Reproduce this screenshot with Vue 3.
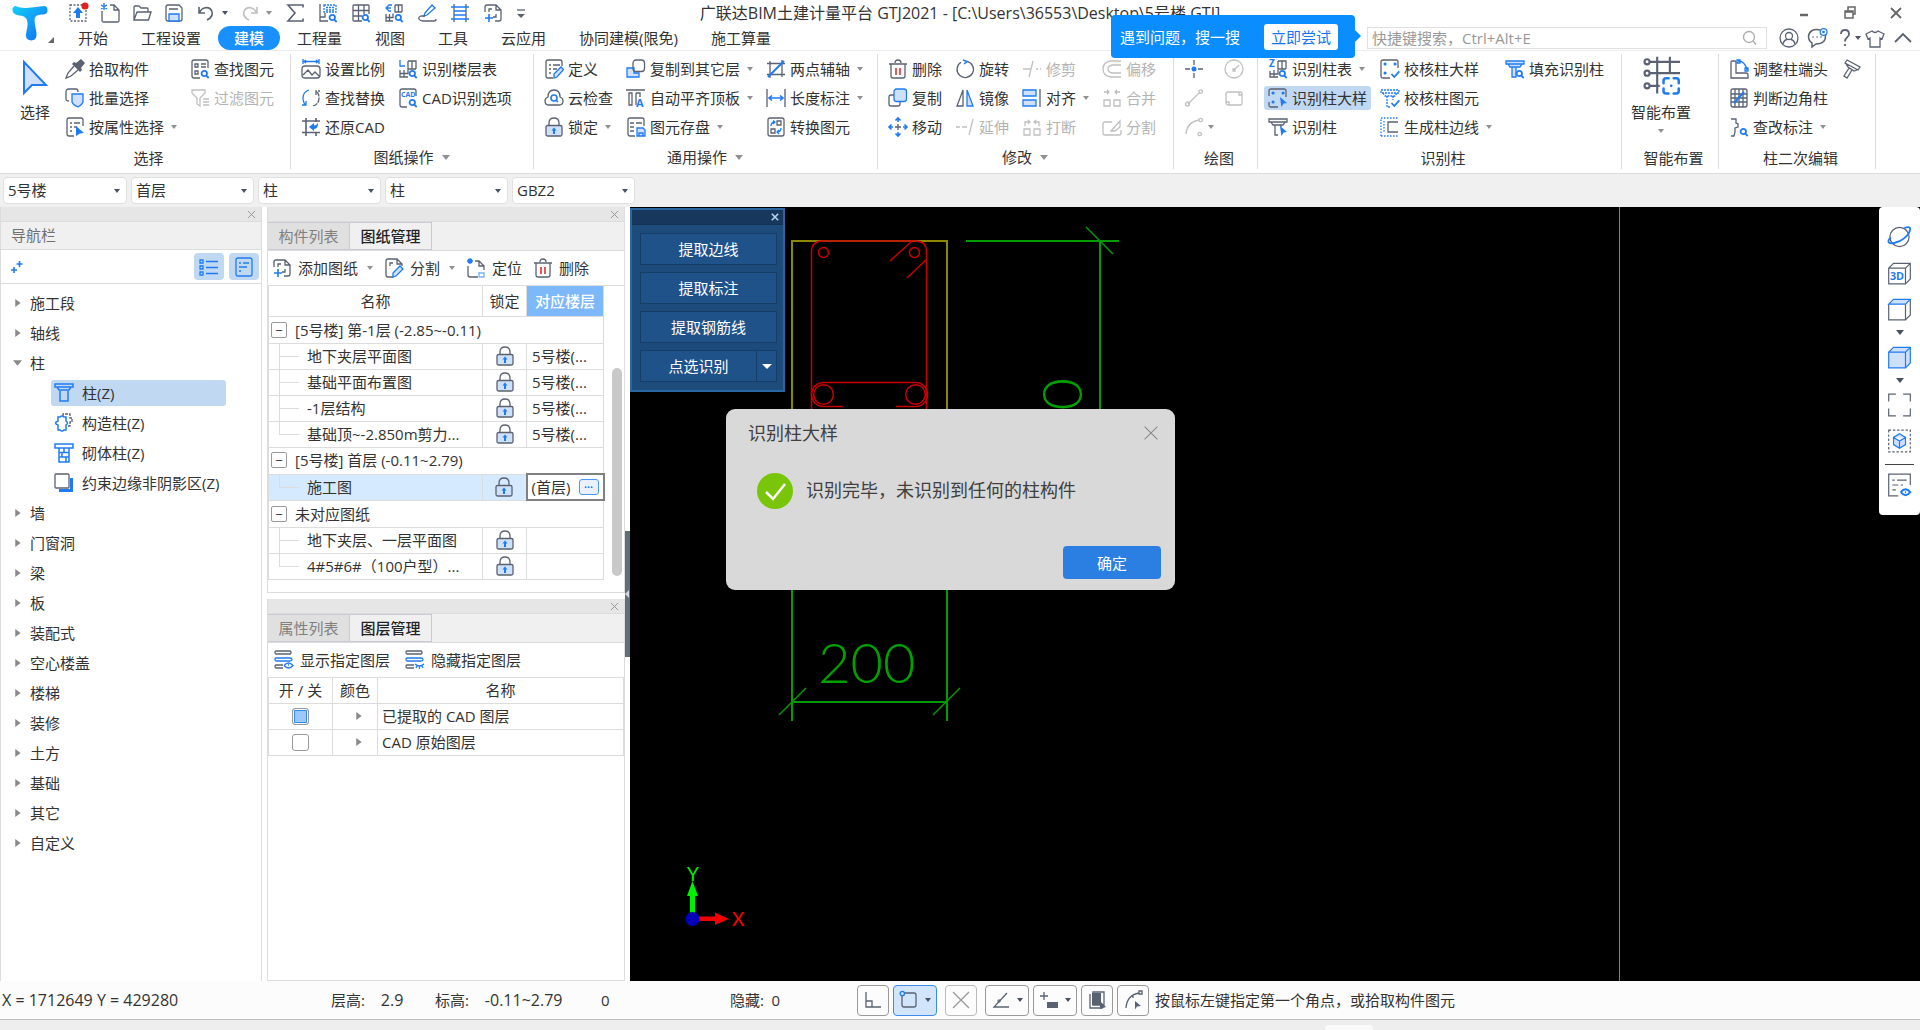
<script setup>
import { h, ref } from 'vue'

/* icon drawing helpers: dark stroke, accent stroke, accent fill, soft filled shape, dark fill */
const d = (path, extra = '') => `<path d="${path}" ${extra}/>`
const a = (path, extra = '') => `<path d="${path}" stroke="var(--acc)" ${extra}/>`
const f = (path) => `<path d="${path}" fill="var(--acc)" stroke="none"/>`
const l = (path) => `<path d="${path}" fill="var(--soft)" stroke="var(--acc)"/>`
const k = (path) => `<path d="${path}" fill="currentColor" stroke="none"/>`
const glass = a('M17 14.5a2.7 2.7 0 1 1-5.4 0a2.7 2.7 0 0 1 5.4 0M16.3 16.6l2.4 2.4', 'stroke-width="1.8"')
const cursor = f('M12 9l7 6-3.4.5L13.4 19z')
const check = a('M11.5 15l2.8 3 5-5.6', 'stroke-width="1.8"')
const pin = a('M5 5h.1M15 5h.1M5 14h.1', 'stroke-width="3" stroke-linecap="round"')

const icons = {
  upload: d('M2 2h16v16H2z', 'stroke-dasharray="2 1.5"') + f('M10 4l5 6h-3v5H8v-5H5z') + '<circle cx="17" cy="3" r="3.6" fill="#e02020" stroke="none"/>',
  create: d('M10 2h4l5 5v10.500a1.500 1.500 0 0 1-1.500 1.500H3.500A1.500 1.500 0 0 1 2 17.500V8M14 2v5h5') + a('M4 0v7M1 2l6 4M7 2L1 6'),
  open: d('M2 17V4q0-1 1-1h4l2 2h6q1 0 1 1v3M2 17l3-8h14l-2.500 8z'),
  save: d('M2 4q0-2 2-2h11l3 3v11q0 2-2 2H4q-2 0-2-2zM5 6h9') + l('M5 18v-7h10v7z'),
  undo: d('M3 4v6h6M3.500 9.500C6 4 13 3 15.500 7.500c2 4-.5 7.500-4.500 9.500', 'stroke-width="1.600"'),
  redo: d('M17 4v6h-6M16.500 9.500C14 4 7 3 4.500 7.500c-2 4 .5 7.500 4.500 9.500', 'stroke-width="1.600"'),
  sum: d('M18 4.500V2H3l7 8-7 8h15v-2.500', 'stroke-width="1.600"'),
  floorFind: d('M2 1v17h8M2 14h5V10') + a('M6 2h12v7H6zM8 4.500h8M8 7h8', 'stroke-dasharray="2 1"') + glass,
  gridFind: d('M2 3q0-1 1-1h14q1 0 1 1v8M2 3v14q0 1 1 1h8M2 7.500h16M2 13h9M7.500 2v16M13 2v9') + glass,
  swapFind: d('M11 2h7v7M11 2v7h7M14.500 2v7M2 11v7h7M2 14.500h7v-4M5.500 11v7') + a('M8 2H5L2 5l3 3h2M2 5h5') + glass,
  pencil: a('M8 10l7-8 3 3-8 7-3 1z') + d('M8 13H4q-3 1-2 3 1 2 4 2h11q2 0 2-2'),
  ladder: d('M4 1v18M16 1v18') + a('M1 4h18M1 16h18M4 8h12M4 12h12'),
  sheetAdd: d('M2 9V4q0-2 2-2h9l5 5v9q0 2-2 2h-4M6 9V6h3M13 11v3h-3M13 2v5h5') + a('M6 11v8M2 15h8', 'stroke-width="1.600"'),
  more: d('M6 7h8') + k('M6 11h8l-4 4z'),
  dropper: k('M11 4l5-4 4 4-4 5 1 2-2 2-8-8 2-2z') + d('M9 7l-6 7-2 5 5-2 7-6'),
  batch: d('M4 13q-3 0-3-2V4q0-3 3-3h7q2 0 2 3') + l('M7 6h11v8q-1 3-5 5-5-2-6-5z'),
  props: d('M9 19H4q-2 0-2-2V3q0-2 2-2h12q2 0 2 2v6M5 6h2M9 6h6M5 10h2M9 10h3M5 14h2') + f('M11 9l8 7-4 .5L11 19z'),
  findEl: d('M10 19H4q-2 0-2-2V3q0-2 2-2h12q2 0 2 2v6M5 5h3v3H5zM5 12h3v3H5zM11 5h5M11 8h5') + glass,
  filter: d('M2 2h13v3l-5 5v8l-3-2v-6L2 5zM13 11h6M13 14h6M13 17h6'),
  scale: a('M2 0v5M18 0v5M2 2.500h16M5 1L3 2.500 5 4M15 1l2 1.500L15 4') + d('M1 10q0-3 3-3h12q3 0 3 3v6q0 3-3 3H4q-3 0-3-3zM2 16l5-5 4 5 3-3 4 4'),
  replace: a('M8 2q-6 2-6 8 0 5 3 7M5 13v4H1') + d('M12 18q6-2 6-8 0-5-3-7M15 7V3h4M12 2h.1M8 18h.1', 'stroke-dasharray="5 1"'),
  restore: d('M5 1v18M15 1v4M15 15v4M1 4h18M1 15.500h18', 'stroke-width="1.600"') + f('M8 10l5-4v2.500q3 0 4-3 .5 6-4 6.500v2z'),
  floorTable: d('M10 2h8v8M10 2v8h8M14 2v8M2 11v7h8M2 14.500h8v-4M6 11v7') + a('M2 1v6h5') + glass,
  cadOpt: d('M9 19H4q-2 0-2-2V3q0-2 2-2h12q2 0 2 2v5') + '<text x="3" y="9" font-size="7" font-weight="700" fill="var(--acc)" stroke="none">CAD</text>' + glass,
  define: d('M9 19H4q-2 0-2-2V3q0-2 2-2h12q2 0 2 2v4M5 6h2M9 6h7M5 10h2M9 10h4M5 14h2') + l('M10 15l7-7 2.500 2.500L13 18l-3 1z'),
  cloud: d('M5 17q-4 0-4-4 0-3 3-4Q4 2 10 2t6 7q3 1 3 4 0 4-4 4z') + a('M13 10a3 3 0 1 1-6 0a3 3 0 0 1 6 0M12 12l2 2', 'stroke-width="1.600"'),
  lock: d('M5 9V6q0-5 5-5t5 5v3') + '<rect x="2" y="8.500" width="16" height="10.500" rx="1.500" fill="var(--soft)"/>' + f('M10 10.500l2.500 3H11v3.500H9v-3.500H7.500z'),
  copyLayer: l('M1 9h7v5h5v4H1z') + '<rect x="7" y="1" width="11.500" height="11.500" rx="3"/>',
  autoTop: d('M0 2h19M3 5h3v12H3zM10 5h4v4M10 5v12') + '<text x="10" y="19" font-size="11" font-weight="700" fill="var(--acc)" stroke="none">A</text>',
  saveEl: d('M9 19H4q-2 0-2-2V3q0-2 2-2h12q2 0 2 2v6M4 6h4M10 6h6M4 10h4M4 14h4') + l('M11 11h6l2 2v6h-8zM13 19v-3h4v3'),
  axisTwo: d('M4 2v17M16 1v17M1 4.500h18M1 15.500h18') + a('M2 18L18 2', 'stroke-width="2"'),
  length: d('M1 1v18M19 1v18') + a('M3 10h14M6 7.500L3 10l3 2.500M14 7.500l3 2.500-3 2.500', 'stroke-width="1.600"'),
  convert: d('M2 3q0-2 2-2h12q2 0 2 2v14q0 2-2 2H4q-2 0-2-2zM11 4h4v4h-4zM5 12h4v4H5z') + a('M5 9q0-4 4-4M7 3.500L9 5 7 7M15 11q0 4-4 4M13 13l-2 2 2 2'),
  trash: d('M1 5h18M7 4q0-3 3-3t3 3M3 5v12q0 2 2 2h10q2 0 2-2V5') + '<path d="M8 9v7M12 9v7" stroke="#e03030" stroke-width="1.600"/>',
  rotate: d('M12 2.300a8.200 8.200 0 1 1-6 1') + a('M8 1l4 1.500L9 5', 'stroke-width="1.600"'),
  trim: d('M1 10h8M14 10h2M18 10h1M11 2L7 18'),
  copy: d('M6 7H3q-2 0-2 2v7q0 2 2 2h7q2 0 2-2v-2') + '<rect x="6" y="1" width="12.500" height="12.500" rx="2.500" fill="var(--soft)" stroke="var(--acc)"/>',
  mirror: d('M8 2v16H2z') + l('M12 2v16h6z'),
  align: l('M1 2h13v6H1zM1 12h13v6H1z') + d('M18 1v18'),
  move: a('M10 1v4M10 19v-4M1 10h4M19 10h-4M7.500 3.500L10 1l2.500 2.500M7.500 16.500L10 19l2.500-2.500M3.500 7.500L1 10l2.500 2.500M16.500 7.500L19 10l-2.500 2.500', 'stroke-width="1.600"') + d('M10 7v6M7 10h6'),
  extend: d('M1 10h4M7 10h5M18 2l-4 16'),
  split2: d('M2 12h6v6H2zM12 12h6v6h-6zM3 9V5h5M6 3l2 2-2 2M17 9V5h-5M14 3l-2 2 2 2'),
  offset: d('M19 2H9q-8 1-8 8t8 8h10M19 6h-9q-4 1-4 4t4 4h9'),
  merge: d('M2 12h6v6H2zM12 12h6v6h-6zM2 4h5M5 2l2 2-2 2M18 4h-5M15 2l-2 2 2 2'),
  divide: d('M10 5H3q-2 0-2 2v9q0 2 2 2h14q2 0 2-2v-3M9 14l9-10v6l-5 4z'),
  point: d('M10 1v5M10 14v5M1 10h5M14 10h5') + '<circle cx="10" cy="10" r="2.500" fill="var(--acc)" stroke="none"/>',
  circle: '<circle cx="10" cy="10" r="9"/>' + d('M10 11l5-5M9 10h2v2H9z'),
  line: d('M4 16L16 4M1.500 16a2 2 0 1 0 4 0a2 2 0 1 0-4 0M15 3.500a1.700 1.700 0 1 0 3.400 0a1.700 1.700 0 1 0-3.400 0'),
  rect: '<rect x="2" y="4" width="16" height="13" rx="2"/>' + d('M15 4v3h3M2 14h3v3'),
  arc: d('M2 17Q3 5 15 3M15 3a1.700 1.700 0 1 0 3.400 0a1.700 1.700 0 1 0-3.400 0M14 17a1.700 1.700 0 1 0 3.400 0a1.700 1.700 0 1 0-3.400 0'),
  colTable: d('M10 2h8v8M10 2v8h8M14 2v8M2 12v6h8M2 15h8v-4M6 11v7') + '<text x="1" y="8" font-size="10" font-weight="700" fill="var(--acc)" stroke="none">Z</text>' + glass,
  colDetail: d('M10 19H3q-2 0-2-2v-3M1 8V3q0-2 2-2h13q2 0 2 2v6') + pin + cursor,
  col: d('M1 2h18v3H1zM3 5l2 3h10l2-3M7 8v10h3M13 8v2') + cursor,
  chkDetail: d('M10 19H3q-2 0-2-2V3q0-2 2-2h13q2 0 2 2v6') + pin + check,
  chkCol: a('M1 2h18v3H1zM3 5l2 3h10l2-3M7 8v11h3M13 8v4', 'stroke-dasharray="2 1"') + check,
  genEdge: a('M1 19V1h18M1 19h18M4 4v12', 'stroke-dasharray="1.500 1.500"') + d('M18 5H8v10h10'),
  fillCol: l('M1 2h18v3H1zM3 5l2 3h10l2-3M7 8v10h4V8z') + glass,
  adjust: d('M2 3q0-1 1-1h3q1 0 1 1v11h10q2 0 2 2v3H2z') + a('M9 2q7 0 9 9M8 1h3v3H8zM16 9h3v3h-3z'),
  judge: d('M2 3q0-2 2-2h12q2 0 2 2v14q0 2-2 2H4q-2 0-2-2zM6 1v18M10 1v18M14 1v18M2 6h16M2 10h16M2 14h16') + a('M5 15L15 4', 'stroke-width="2"'),
  editMark: d('M2 2h5v4L9 7v3L6 11v4l-1 4H2') + glass,
  hammer: d('M6 1l13 7-2 3L4 4zM5 5l2 3 6 4 3-1M8 9l-5 8 3 2 5-8'),
  toList: a('M1 3h3v3H1zM1 9h3v3H1zM1 15h3v3H1zM7 4.500h12M7 10.500h12M7 16.500h12'),
  toCard: a('M2 3q0-2 2-2h12q2 0 2 2v14q0 2-2 2H4q-2 0-2-2zM5 6h2M9 6h6M5 10h8M5 14h2'),
  colZ: a('M1 1h18v3H1zM3 4l2 3h10l2-3M6 8v10h8V8', 'stroke-width="1.500"'),
  colG: d('M9 3V1h7v4h2v4h-2v4h-2', 'stroke-dasharray="3 1"') + a('M4 4h2q2-2 4 0h2v4q3 2 0 4v5h-2q-2 2-4 0H4v-5q-5-2 0-4z', 'stroke-width="1.500"'),
  colQ: a('M1 1h18v4H1zM5 5v14h10V5M5 9.500h10M5 14h10M10 5v4.500M8 9.500V14M12 14v5', 'stroke-width="1.500"'),
  colY: k('M5 17h12V6h2v13H5z') + f('M5 16h11V5h3v14H5z') + '<rect x="1" y="1" width="14" height="14" rx="1" fill="#fff"/>',
  sheetSplit: d('M9 19H4q-2 0-2-2V3q0-2 2-2h9l5 5v2M13 1v5h5M6 8V5h3') + l('M9 15l7-7 3 3-7 7-3 1z'),
  locate: d('M2 8v9q0 2 2 2h8M9 3h4l5 5v4M13 3v5h5') + a('M4 0v6M1 3h6M2 1l4 4M6 1L2 5') + a('M13 19v-5M13 15h5v4h-5', 'opacity="0.600"'),
  layersOn: d('M2 1h14q1 0 1 1.500T16 4H2Q1 4 1 2.500T2 1M9 18H2q-1 0-1-1.500T2 15h7') + a('M2 8h14q2 0 2 1.500T16 11H2Q1 11 1 9.500T2 8M10 15.500q4.500-5 9 0-4.500 5-9 0M14 15h1'),
  layersOff: d('M2 1h14q1 0 1 1.500T16 4H2Q1 4 1 2.500T2 1M9 18H2q-1 0-1-1.500T2 15h7') + a('M2 8h14q2 0 2 1.500T16 11H2Q1 11 1 9.500T2 8M10 14q4.500 4 9 0M12 16l-1 2M14.500 16v3M17 16l1 2'),
  orbit: '<circle cx="10" cy="10" r="8"/>' + a('M14 2.500q5-2 5 1-1 6-9 10-7 3-9 1-1-2 2-4', 'stroke-width="1.500"'),
  cube3d: d('M1 6h14v13H1zM1 6l4-4h14v13l-4 4M15 6l4-4') + '<text x="2" y="16" font-size="9" font-weight="700" fill="var(--acc)" stroke="none">3D</text>',
  cubeTop: d('M1 6v13h14V6M19 2v13l-4 4') + l('M1 6l4-4h14l-4 4z'),
  cubeFull: l('M1 6h14v13H1zM1 6l4-4h14v13l-4 4M15 6l4-4'),
  frame: d('M1 7V1h6M13 1h6v6M19 13v6h-6M7 19H1v-6'),
  cubeBox: d('M1 1h18v18H1z', 'stroke-dasharray="2 1.500"') + l('M10 4l5 3v6l-5 3-5-3V7zM5 7l5 3 5-3M10 10v6'),
  eyeList: d('M9 19H1V1h18v9M4 6h2M8 6h8M4 10h5M11 10h2M4 14h3') + a('M11 16q4-5 8 0-4 5-8 0M14.500 16h1', 'stroke-width="1.600"'),
  smart: d('M6 3h24M6 12h24M6 22h8M12 -1v29M22 -1v13M2 3a2 2 0 1 0 4 0a2 2 0 1 0-4 0M2 12a2 2 0 1 0 4 0a2 2 0 1 0-4 0M2 22a2 2 0 1 0 4 0a2 2 0 1 0-4 0', 'stroke-width="1.700"') + a('M21 16h-2q-2 0-2 2v2M25 16h2q2 0 2 2v2M17 24v2q0 2 2 2h2M29 24v2q0 2-2 2h-2M23 22h.1', 'stroke-width="2" stroke-linecap="round"'),
  user: '<circle cx="10" cy="10" r="9"/><circle cx="10" cy="8" r="3.500"/>' + d('M4 16q1-4 4-4.500M16 16q-1-4-4-4.500'),
  chat: d('M13 2Q3 0 1.500 8q0 5 3.500 7v4l4-3q10 0 9.500-9M6 9h.1M10 9h.1M14 9h.1', 'stroke-width="1.500" stroke-linecap="round"') + a('M20 4a3.400 3.400 0 1 1-6.800 0a3.400 3.400 0 0 1 6.800 0M15.500 3l2 2M17.500 3l-2 2'),
  help: d('M6 6q0-4 4-4t4 4q0 2-2 3.500t-2 4M10 16v2', 'stroke-width="1.800"'),
  shirt: d('M7 3l-6 3 2 5 2-1v9h10v-9l2 1 2-5-6-3q-3 3-6 0z'),
  up: d('M2 14l8-8 8 8', 'stroke-width="1.800"'),
  search: '<circle cx="9" cy="9" r="5.500"/>' + d('M13 13l3 3.500'),
  min: d('M6 12h8', 'stroke-width="2.500"'),
  restoreWin: d('M5 8h8v7H5zM8 8V4h7v7h-2M5 9h8', 'stroke-width="1.500"'),
  close: d('M5 5l10 10M15 5L5 15', 'stroke-width="1.800"'),
  ortho: d('M3 2v15h15M3 11h6v6'),
  snapRect: d('M6 3h9q2 0 2 2v10q0 2-2 2H5q-2 0-2-2V6') + a('M5.500 3.500a2.200 2.200 0 1 1-4.400 0a2.200 2.200 0 0 1 4.400 0'),
  cross: d('M2 2l16 16M18 2L2 18'),
  angle: d('M16 3L3 17h15') + d('M7 10h2v2H7z', 'stroke-width="1"'),
  plusBox: d('M5 2v8M1 6h8') + k('M8 12h11v6H8z'),
  stack: d('M3 4v14h12v-3M6 2h11v13H6z') + k('M5 3h9v12H5zM13 11l6 6-6 2z'),
  curve: d('M3 18Q4 5 16 3M16 1h3v3h-3zM8 6h2v2') + k('M12 11l6 5-4 .5-2 3z'),
}

const Ico = (props) =>
  h('svg', {
    viewBox: props.box || '0 0 20 20',
    class: 'ico',
    'aria-hidden': 'true',
    innerHTML: icons[props.name],
  })
Ico.props = ['name', 'box']

const quickFirst = ['upload', 'create', 'open', 'save', 'undo']
const quickRest = ['sum', 'floorFind', 'gridFind', 'swapFind', 'pencil', 'ladder', 'sheetAdd']
const tabs = ['开始', '工程设置', '建模', '工程量', '视图', '工具', '云应用', '协同建模(限免)', '施工算量']

const it = (icon, text, opt = '') => ({ icon, text, caret: opt.includes('v'), off: opt.includes('x'), on: opt.includes('o') })
const groups = [
  { key: 'select', label: '选择', big: 'arrow', cols: [
    [it('dropper', '拾取构件'), it('batch', '批量选择'), it('props', '按属性选择', 'v')],
    [it('findEl', '查找图元'), it('filter', '过滤图元', 'x')] ] },
  { key: 'sheet', label: '图纸操作', drop: true, cols: [
    [it('scale', '设置比例'), it('replace', '查找替换'), it('restore', '还原CAD')],
    [it('floorTable', '识别楼层表'), it('cadOpt', 'CAD识别选项')] ] },
  { key: 'common', label: '通用操作', drop: true, cols: [
    [it('define', '定义'), it('cloud', '云检查'), it('lock', '锁定', 'v')],
    [it('copyLayer', '复制到其它层', 'v'), it('autoTop', '自动平齐顶板', 'v'), it('saveEl', '图元存盘', 'v')],
    [it('axisTwo', '两点辅轴', 'v'), it('length', '长度标注', 'v'), it('convert', '转换图元')] ] },
  { key: 'modify', label: '修改', drop: true, cols: [
    [it('trash', '删除'), it('copy', '复制'), it('move', '移动')],
    [it('rotate', '旋转'), it('mirror', '镜像'), it('extend', '延伸', 'x')],
    [it('trim', '修剪', 'x'), it('align', '对齐', 'v'), it('split2', '打断', 'x')],
    [it('offset', '偏移', 'x'), it('merge', '合并', 'x'), it('divide', '分割', 'x')] ] },
  { key: 'draw', label: '绘图', cols: [
    [it('point', ''), it('line', '', 'x'), it('arc', '', 'xv')],
    [it('circle', '', 'x'), it('rect', '', 'x')] ] },
  { key: 'column', label: '识别柱', cols: [
    [it('colTable', '识别柱表', 'v'), it('colDetail', '识别柱大样', 'o'), it('col', '识别柱')],
    [it('chkDetail', '校核柱大样'), it('chkCol', '校核柱图元'), it('genEdge', '生成柱边线', 'v')],
    [it('fillCol', '填充识别柱')] ] },
  { key: 'smart', label: '智能布置', big: 'smart', cols: [] },
  { key: 'edit', label: '柱二次编辑', cols: [
    [it('adjust', '调整柱端头'), it('judge', '判断边角柱'), it('editMark', '查改标注', 'v')],
    [it('hammer', '')] ] },
]

const filters = ['5号楼', '首层', '柱', '柱', 'GBZ2']

const tree = [
  { name: '施工段' }, { name: '轴线' },
  { name: '柱', open: true, kids: [
    { icon: 'colZ', name: '柱(Z)', on: true }, { icon: 'colG', name: '构造柱(Z)' },
    { icon: 'colQ', name: '砌体柱(Z)' }, { icon: 'colY', name: '约束边缘非阴影区(Z)' } ] },
  { name: '墙' }, { name: '门窗洞' }, { name: '梁' }, { name: '板' }, { name: '装配式' }, { name: '空心楼盖' },
  { name: '楼梯' }, { name: '装修' }, { name: '土方' }, { name: '基础' }, { name: '其它' }, { name: '自定义' },
]

const sheets = [
  { group: '[5号楼] 第-1层 (-2.85~-0.11)' },
  { name: '地下夹层平面图', floor: '5号楼(...' },
  { name: '基础平面布置图', floor: '5号楼(...' },
  { name: '-1层结构', floor: '5号楼(...' },
  { name: '基础顶~-2.850m剪力...', floor: '5号楼(...', last: true },
  { group: '[5号楼] 首层 (-0.11~2.79)' },
  { name: '施工图', floor: '(首层)', on: true, last: true },
  { group: '未对应图纸' },
  { name: '地下夹层、一层平面图', floor: '' },
  { name: '4#5#6#（100户型）...', floor: '', last: true },
]

const layers = ref([
  { name: '已提取的 CAD 图层', part: true },
  { name: 'CAD 原始图层', part: false },
])
</script>

<template>
  <div class="app">
    <header class="head">
      <div class="brand">
        <svg viewBox="0 0 40 40" class="logo" aria-hidden="true">
          <defs>
            <linearGradient id="brandFill" x1="0" y1="0" x2="1" y2="1">
              <stop offset="0" stop-color="#12d0f5" /><stop offset="0.6" stop-color="#1292f5" /><stop offset="1" stop-color="#0a6fe8" />
            </linearGradient>
          </defs>
          <path fill="url(#brandFill)" d="M5 2q6 3 14 2t16-2q4 0 4 4.500T34 11q-8 0-8.500 4-.5 5 1.500 13 2 10-5 10.500-8-.5-5-10.500 2-8 0-12-2-4-8-4-7-1-7-6 0-3 3-4z" />
        </svg>
        <i class="corner"></i>
      </div>
      <div class="head-rows">
        <div class="title-row">
          <div class="quick">
            <button v-for="q in quickFirst" :key="q" class="q" :aria-label="q"><Ico :name="q" /></button>
            <i class="caret tight dark"></i>
            <button class="q off" aria-label="redo"><Ico name="redo" /></button>
            <i class="caret tight"></i>
            <button v-for="q in quickRest" :key="q" class="q wide" :aria-label="q">
              <Ico :name="q" />
            </button>
            <button class="q last" aria-label="more"><Ico name="more" /></button>
          </div>
          <h1>广联达BIM土建计量平台 GTJ2021 - [C:\Users\36553\Desktop\5号楼.GTJ]</h1>
          <div class="win">
            <button aria-label="minimize"><Ico name="min" /></button>
            <button aria-label="restore"><Ico name="restoreWin" /></button>
            <button aria-label="close"><Ico name="close" /></button>
          </div>
        </div>
        <div class="tab-row">
          <nav class="tabs">
            <button v-for="t in tabs" :key="t" :class="{ on: t === '建模' }">{{ t }}</button>
          </nav>
          <div class="tools">
            <div class="search">
              <input type="text" placeholder="快捷键搜索，Ctrl+Alt+E" aria-label="快捷键搜索" />
              <Ico name="search" />
              <div class="tip">
                <span>遇到问题，搜一搜</span>
                <button>立即尝试</button>
              </div>
            </div>
            <button aria-label="user"><Ico name="user" /></button>
            <button aria-label="chat"><Ico name="chat" /></button>
            <button class="help" aria-label="help"><Ico name="help" /><i class="caret dark"></i></button>
            <button aria-label="skin"><Ico name="shirt" /></button>
            <button aria-label="collapse"><Ico name="up" /></button>
          </div>
        </div>
      </div>
    </header>

    <section class="ribbon">
      <div v-for="g in groups" :key="g.key" class="group" :class="'g-' + g.key">
        <div class="cols">
          <button v-if="g.big === 'arrow'" class="big pick">
            <svg viewBox="0 0 26 36" class="pointer" aria-hidden="true">
              <path d="M2 2v31l8-8h14z" fill="#cfe0fa" stroke="#1f7bf2" stroke-width="2" />
            </svg>
            <span>选择</span>
          </button>
          <button v-if="g.big === 'smart'" class="big lay">
            <Ico name="smart" box="0 0 30 30" />
            <span>智能布置</span>
            <i class="caret"></i>
          </button>
          <div v-for="(c, ci) in g.cols" :key="ci" class="col">
            <button v-for="b in c" :key="b.icon" class="cmd" :class="{ off: b.off, on: b.on }" :aria-label="b.text || b.icon">
              <Ico :name="b.icon" /><span v-if="b.text">{{ b.text }}</span><i v-if="b.caret" class="caret"></i>
            </button>
          </div>
        </div>
        <div class="glabel" :class="{ drop: g.drop }">{{ g.label }}<i v-if="g.drop" class="caret large"></i></div>
      </div>
    </section>

    <section class="filters">
      <div v-for="(o, i) in filters" :key="i" class="pickbox">
        <select :aria-label="o"><option>{{ o }}</option></select>
        <i class="caret dark"></i>
      </div>
    </section>

    <main class="body">
      <aside class="nav">
        <div class="bar"><button aria-label="close"><Ico name="cross" /></button></div>
        <h2>导航栏</h2>
        <div class="nav-tools">
          <svg viewBox="0 0 12 14" class="plus" aria-hidden="true">
            <path d="M3 7v6M0 10h6M8.500 1v6M5.500 4h6" stroke="#1f7bf2" stroke-width="1.600" fill="none" />
          </svg>
          <button aria-label="list"><Ico name="toList" /></button>
          <button aria-label="card"><Ico name="toCard" /></button>
        </div>
        <ul class="tree">
          <li v-for="n in tree" :key="n.name">
            <button class="node"><i class="tri" :class="{ open: n.open }"></i>{{ n.name }}</button>
            <ul v-if="n.kids">
              <li v-for="c in n.kids" :key="c.name">
                <button class="leaf" :class="{ on: c.on }"><Ico :name="c.icon" />{{ c.name }}</button>
              </li>
            </ul>
          </li>
        </ul>
      </aside>

      <div class="mid">
        <section class="panel">
          <div class="bar"><button aria-label="close"><Ico name="cross" /></button></div>
          <div class="ptabs"><button>构件列表</button><button class="on">图纸管理</button></div>
          <div class="ptools">
            <button><Ico name="sheetAdd" />添加图纸<i class="caret"></i></button>
            <button><Ico name="sheetSplit" />分割<i class="caret"></i></button>
            <button><Ico name="locate" />定位</button>
            <button><Ico name="trash" />删除</button>
          </div>
          <div class="sheet-wrap">
            <table class="sheets">
              <colgroup><col class="c-name" /><col class="c-lock" /><col class="c-floor" /></colgroup>
              <thead><tr><th>名称</th><th>锁定</th><th class="hot">对应楼层</th></tr></thead>
              <tbody>
                <tr v-for="(s, i) in sheets" :key="i" :class="{ grp: s.group, sel: s.on }">
                  <td v-if="s.group" colspan="3"><button class="fold" aria-label="fold">−</button>{{ s.group }}</td>
                  <template v-else>
                    <td class="item" :class="{ last: s.last }">{{ s.name }}</td>
                    <td class="lk"><Ico name="lock" /></td>
                    <td class="fl" :class="{ edit: s.on }"><div><span>{{ s.floor }}</span><button v-if="s.on" aria-label="browse">•••</button></div></td>
                  </template>
                </tr>
              </tbody>
            </table>
            <div class="scroll"></div>
          </div>
        </section>
        <section class="panel grow">
          <div class="bar"><button aria-label="close"><Ico name="cross" /></button></div>
          <div class="ptabs"><button>属性列表</button><button class="on">图层管理</button></div>
          <div class="ptools loose">
            <button><Ico name="layersOn" />显示指定图层</button>
            <button><Ico name="layersOff" />隐藏指定图层</button>
          </div>
          <table class="layers">
            <colgroup><col class="c-sw" /><col class="c-color" /><col /></colgroup>
            <thead><tr><th>开 / 关</th><th>颜色</th><th>名称</th></tr></thead>
            <tbody>
              <tr v-for="y in layers" :key="y.name">
                <td class="sw"><input type="checkbox" :class="{ part: y.part }" :aria-label="y.name" /></td>
                <td class="sw"><i class="tri"></i></td>
                <td>{{ y.name }}</td>
              </tr>
            </tbody>
          </table>
        </section>
      </div>

      <div class="split"><button aria-label="collapse"></button></div>

      <div class="canvas">
        <svg class="drawing" width="1290" height="774" viewBox="630 207 1290 774" aria-hidden="true">
          <g fill="none" stroke="#8c8600" stroke-width="2">
            <path d="M792 420V241H947V420" />
          </g>
          <g fill="none" stroke="#c80000" stroke-width="1.500">
            <path d="M811.500 420V252q0-11 11-11h93q11 0 11 11v168M912 241l-22 20M927 259l-20 19" />
            <circle cx="823.500" cy="252.500" r="5" /><circle cx="914.500" cy="252.500" r="5" />
            <path d="M843 406.500h-19.500a12 12 0 0 1 0-24h92a12 12 0 0 1 0 24H896" />
            <circle cx="823.500" cy="394.500" r="9.800" /><circle cx="915.500" cy="394.500" r="9.800" />
          </g>
          <g fill="none" stroke="#009c00" stroke-width="2">
            <path d="M966 241h153M1100 240v180M792 580v141M947 580v141M792 702h155" />
            <path d="M1086 227l27 27M779 715l27-27M933 715l27-27" stroke-width="1.500" />
          </g>
          <rect x="1619" y="207" width="1" height="774" fill="#00d800" />
          <text class="dim" x="818" y="683">200</text>
          <text class="dim" text-anchor="end" transform="translate(1082 378) rotate(-90)">00</text>
          <path d="M690 919V896h-3l5.500-15 5.500 15h-3v23z" fill="#00f000" />
          <path d="M692 916.500h23v-4l14 6.500-14 6v-4h-23z" fill="#f00000" />
          <ellipse cx="692.500" cy="919" rx="7" ry="7" fill="#0000b8" />
          <text class="axis" x="687" y="881" fill="#00f000">Y</text>
          <text class="axis" x="732" y="926" fill="#ff0000">X</text>
        </svg>

        <div class="palette">
          <div class="pbar"><button aria-label="close"><Ico name="cross" /></button></div>
          <div class="pbtns">
            <button>提取边线</button>
            <button>提取标注</button>
            <button>提取钢筋线</button>
            <div class="combo"><button>点选识别</button><button class="dd" aria-label="more"><i class="caret"></i></button></div>
          </div>
        </div>

        <div class="side">
          <button aria-label="orbit"><Ico name="orbit" /></button>
          <button aria-label="3D"><Ico name="cube3d" /></button>
          <button aria-label="top"><Ico name="cubeTop" /></button>
          <i class="caret dark large"></i>
          <button aria-label="solid"><Ico name="cubeFull" /></button>
          <i class="caret dark large"></i>
          <button aria-label="fit"><Ico name="frame" /></button>
          <button aria-label="section"><Ico name="cubeBox" /></button>
          <hr />
          <button aria-label="display"><Ico name="eyeList" /></button>
        </div>

        <div class="dialog" role="dialog" aria-label="识别柱大样">
          <div class="dhead">
            <span>识别柱大样</span>
            <button aria-label="close"><Ico name="cross" /></button>
          </div>
          <div class="dmsg">
            <svg viewBox="0 0 36 36" class="ok" aria-hidden="true">
              <circle cx="18" cy="18" r="18" fill="#79c50a" />
              <path d="M9 19l7 7 12-15" fill="none" stroke="#fff" stroke-width="2.500" />
            </svg>
            <p>识别完毕，未识别到任何的柱构件</p>
          </div>
          <div class="dfoot"><button>确定</button></div>
        </div>
      </div>
    </main>

    <footer class="status">
      <span class="s-pos">X = 1712649 Y = 429280</span>
      <span class="s-h">层高: <b>2.9</b></span>
      <span class="s-e">标高: <b>-0.11~2.79</b></span>
      <span class="s-n">0</span>
      <span class="s-n">隐藏:&ensp;0</span>
      <div class="sbtns">
        <button aria-label="ortho"><Ico name="ortho" /></button>
        <button class="on" aria-label="snap"><Ico name="snapRect" /><i class="caret dark"></i></button>
        <button class="off sep" aria-label="cross"><Ico name="cross" /></button>
        <button class="sep" aria-label="angle"><Ico name="angle" /><i class="caret dark"></i></button>
        <button aria-label="offset"><Ico name="plusBox" /><i class="caret dark"></i></button>
        <button aria-label="stack"><Ico name="stack" /></button>
        <button aria-label="curve"><Ico name="curve" /></button>
      </div>
      <span>按鼠标左键指定第一个角点，或拾取构件图元</span>
    </footer>
    <div class="edge"><i></i></div>
  </div>
</template>

<style>
body { margin: 0; }
.ico { width: 20px; height: 20px; flex: none; fill: none; stroke: currentColor; stroke-width: 1.3; display: block; overflow: visible; }
</style>

<style scoped>
.app {
  --acc: #1f7bf2;
  --soft: #cfe0fa;
  --ink: #333;
  --line: #dcdcdc;
  min-height: 100vh;
  display: flex;
  flex-direction: column;
  background: #fff;
  color: var(--ink);
  font: 15px/20px "Open Sans", "Noto Sans CJK SC", sans-serif;
}
* { box-sizing: border-box; }
button, input, select { font: inherit; color: inherit; }
button { border: 0; padding: 0; margin: 0; background: none; white-space: nowrap; cursor: default; }
ul { list-style: none; margin: 0; padding: 0; }
svg { color: #555d6e; }
.ico { color: #5a6272; }
.off { color: #b4b4b4; --acc: #c0c0c0; --soft: #fff; }
.off svg { color: #c0c0c0; }
.caret { flex: none; width: 0; height: 0; border: 3px solid transparent; border-top: 4px solid #909090; border-bottom: 0; }
.caret.dark { border-top-color: #4a5262; }
.caret.large { border-width: 4px; border-top-width: 5px; border-bottom: 0; }

/* header */
.head { display: flex; height: 51px; border-bottom: 1px solid #ececec; }
.brand { width: 62px; padding: 4px 0 0 10px; position: relative; }
.logo { width: 39px; height: 38px; display: block; }
.corner { position: absolute; right: 8px; bottom: 7px; border: 3px solid transparent; border-right-color: #666; border-bottom-color: #666; }
.head-rows { flex: 1; min-width: 0; }
.title-row { display: grid; grid-template-columns: 1fr auto 1fr; height: 26px; align-items: center; margin-left: -62px; padding-left: 62px; }
.title-row h1 { margin: 0; font-size: 16px; font-weight: 400; line-height: 24px; white-space: nowrap; margin-left: -62px; }
.quick { display: flex; align-items: center; }
.q { width: 32px; display: flex; justify-content: center; }
.q.wide { width: 33px; }
.q.last { width: 24px; }
.caret.tight { margin: 0 6px 0 0; }
.win { display: flex; justify-content: flex-end; gap: 26px; padding-right: 14px; }
.win svg { color: #666; }
.tab-row { display: flex; justify-content: space-between; height: 24px; }
.tabs { display: flex; gap: 1px; }
.tabs button { padding: 0 16px; height: 24px; border-radius: 12px; }
.tabs .on { background: #1890ff; color: #fff; font-weight: 500; }
.tools { display: flex; align-items: center; gap: 8px; padding-right: 7px; }
.tools > .help { display: flex; align-items: center; width: 22px; }
.tools > button { color: #555d6e; }
.search { position: relative; width: 400px; height: 22px; display: flex; align-items: center; border: 1px solid #e0e0e0; padding: 0 6px 0 4px; margin-right: 4px; }
.search input { flex: 1; min-width: 0; border: 0; outline: 0; padding: 0; background: none; }
.search input::placeholder { color: #999; opacity: 1; }
.search svg { color: #aaa; }
.tip { position: absolute; right: 411px; top: -13px; width: 244px; height: 43px; display: flex; align-items: center; justify-content: space-between; padding: 0 17px 0 9px; border-radius: 4px; background: #0a8eff; color: #fff; z-index: 5; white-space: nowrap; }
.tip::after { content: ""; position: absolute; right: -12px; top: 15px; border: 6px solid transparent; border-left-color: #0a8eff; }
.tip button { width: 74px; height: 26px; border-radius: 3px; background: #fff; color: #1674f0; }

/* ribbon */
.ribbon { display: flex; height: 123px; border-bottom: 1px solid var(--line); }
.group { flex: none; position: relative; display: flex; flex-direction: column; padding: 6px 0 0 6px; }
.group::after { content: ""; position: absolute; right: 0; top: 3px; height: 115px; border-right: 1px solid var(--line); }
.g-select { width: 291px; }
.g-sheet { width: 243px; }
.g-common { width: 344px; }
.g-modify { width: 296px; }
.g-draw { width: 84px; }
.g-column { width: 364px; }
.g-smart { width: 97px; }
.g-edit { width: 157px; }
.cols { display: flex; gap: 5px; height: 85px; }
.col { display: flex; flex-direction: column; gap: 5px; }
.cmd { display: flex; align-items: center; align-self: flex-start; gap: 4px; height: 24px; padding: 0 4px; border-radius: 3px; }
.cmd.on { background: #c0d8f2; }
.cmd .caret { margin: 0 0 0 3px; }
.g-draw .col:first-child { width: 35px; }
.g-draw .cmd .caret { margin: 0; }
.big { display: flex; flex-direction: column; align-items: center; }
.pick { width: 58px; padding-top: 3px; margin-right: -8px; }
.pointer { width: 26px; height: 36px; margin-bottom: 6px; }
.lay { width: 66px; }
.lay .ico { width: 38px; height: 40px; margin-bottom: 5px; }
.lay .caret { margin-top: 7px; }
.glabel { display: flex; align-items: center; justify-content: center; gap: 8px; height: 32px; padding-top: 2px; line-height: 20px; }
.glabel.drop { margin-left: -8px; padding-top: 0; }

/* filters */
.filters { display: flex; gap: 4px; height: 33px; padding: 3px; background: #f0f0f0; }
.pickbox { position: relative; width: 124px; height: 27px; }
.pickbox + .pickbox { width: 123px; }
.pickbox select { appearance: none; width: 100%; height: 27px; padding: 0 4px 2px; border: 1px solid #e0e0e0; border-radius: 4px; background: #fff; outline: 0; }
.pickbox .caret { position: absolute; right: 7px; top: 12px; }

/* panels */
.body { flex: 1; display: flex; min-height: 0; }
.bar { height: 15px; background: #e6e6e6; border-bottom: 1px solid var(--line); display: flex; align-items: center; justify-content: flex-end; padding-right: 5px; }
.bar .ico { width: 9px; height: 9px; stroke-width: 2; color: #909090; }
.nav { width: 262px; flex: none; border-right: 1px solid var(--line); border-left: 1px solid var(--line); margin-right: 5px; }
.nav h2 { margin: 0; height: 28px; padding-left: 10px; background: #f0f0f0; border-bottom: 1px solid var(--line); color: #707070; font-size: 15px; font-weight: 400; line-height: 26px; }
.nav-tools { display: flex; align-items: center; gap: 5px; height: 34px; padding: 0 2px 0 10px; border-bottom: 1px solid var(--line); }
.plus { width: 12px; height: 14px; margin-right: auto; }
.nav-tools button { width: 30px; height: 27px; display: flex; justify-content: center; align-items: center; border-radius: 4px; background: #c0d8f2; }
.tree { padding-top: 4px; }
.node { display: flex; align-items: center; gap: 8px; height: 30px; padding-left: 12px; }
.tri { width: 9px; height: 8px; background: #8a8a8a; clip-path: polygon(25% 0, 85% 50%, 25% 100%); }
.tri.open { clip-path: polygon(0 15%, 100% 15%, 50% 85%); }
.leaf { display: flex; align-items: center; gap: 8px; width: 175px; height: 26px; margin: 2px 0 2px 50px; padding-left: 3px; border-radius: 3px; }
.leaf.on { background: #c0d8f2; }
.tree ul li { height: 30px; display: flex; }
.mid { width: 358px; flex: none; display: flex; flex-direction: column; gap: 6px; }
.panel { border: 1px solid var(--line); border-top: 0; }
.panel.grow { flex: 1; }
.ptabs { display: flex; height: 29px; background: #f0f0f0; border-bottom: 1px solid var(--line); }
.ptabs button { width: 82px; border: 1px solid #c8ccd2; border-left: 0; background: #e0e0e0; color: #808080; }
.ptabs .on { background: #f0f0f0; color: #222; font-weight: 500; }
.ptools { display: flex; align-items: center; gap: 11px; height: 35px; padding-left: 4px; border-bottom: 1px solid var(--line); }
.ptools.loose { gap: 15px; padding-left: 6px; }
.ptools button { display: flex; align-items: center; gap: 6px; }
.ptools .caret { margin: 0 0 0 3px; }
.sheet-wrap { display: flex; height: 306px; }
table { border-collapse: collapse; table-layout: fixed; }
th, td { border: 1px solid var(--line); padding: 0; font-weight: 400; white-space: nowrap; overflow: hidden; line-height: 20px; }
table tr:first-child th { border-top: 0; }
.sheets { width: 335px; height: 292px; }
.c-name { width: 214px; }
.c-lock { width: 44px; }
.c-floor { width: 77px; }
.sheets th { height: 30px; }
.sheets .hot { background: #7db8fb; color: #fff; font-weight: 500; }
.sheets td { height: 26px; }
.sheets .grp td { height: 27px; }
.fold { width: 16px; height: 16px; border: 1px solid #999; border-radius: 2px; line-height: 12px; margin: 0 8px 0 2px; vertical-align: 1px; font-size: 13px; }
.item { position: relative; padding-left: 38px; }
.item::before { content: ""; position: absolute; left: 10px; top: 0; height: 100%; border-left: 1px solid var(--line); }
.item.last::before { height: 50%; }
.item::after { content: ""; position: absolute; left: 10px; top: 50%; width: 20px; border-top: 1px solid var(--line); }
.lk .ico { margin: 0 auto; }
.fl { padding-left: 5px; }
.fl div { display: flex; align-items: center; justify-content: space-between; padding-right: 4px; }
.sel td { background: #d5e9ff; }
.sel .edit { background: #fff; border: 2px solid #808080; padding-left: 4px; }
.edit button { width: 20px; height: 16px; border: 1px solid #4a98f5; border-radius: 3px; background: #e8f1fd; color: var(--acc); font-size: 8px; line-height: 12px; }
.scroll { width: 10px; height: 208px; margin: 82px 0 0 7px; border-radius: 5px; background: #c9c9c9; }
.layers { width: 100%; }
.c-sw { width: 64px; }
.c-color { width: 45px; }
.layers th { height: 25px; }
.layers td { height: 26px; }
.layers td:last-child { padding-left: 4px; }
.sw .tri { display: block; margin: 0 0 0 21px; }
.sw input { appearance: none; display: block; width: 17px; height: 17px; margin: 0 auto; border: 1px solid #999; border-radius: 3px; background: #fff; }
.sw .part { background: #9cc8fb; box-shadow: inset 0 0 0 1px #fff, inset 0 0 0 2px #2f8af5; }
.split { width: 5px; flex: none; display: flex; align-items: center; }
.split button { width: 5px; height: 126px; background: #5f6f7a; }
.split button::before { content: ""; display: block; width: 0; border: 4px solid transparent; border-right-color: #d0d8dd; margin-left: -4px; }

/* model canvas */
.canvas { flex: 1; position: relative; min-width: 0; background: #000; overflow: hidden; }
.drawing { position: absolute; left: 0; top: 0; }
.dim { font-family: Lato, sans-serif; font-size: 56px; font-weight: 300; fill: #00a000; }
.axis { font-family: Lato, sans-serif; font-size: 19px; font-weight: 400; }
.palette { position: absolute; left: 0; top: 1px; width: 155px; background: #1d4b7b; border: 2px solid #2a66a2; padding-bottom: 8px; }
.pbar { height: 15px; background: #17385c; display: flex; align-items: center; justify-content: flex-end; padding-right: 4px; border-bottom: 1px solid #143152; }
.pbar .ico { width: 8px; height: 8px; stroke-width: 4; color: #b8d4f0; }
.pbtns { display: flex; flex-direction: column; gap: 7px; padding: 8px 6px 0 8px; color: #fff; }
.pbtns > button, .combo { height: 32px; background: #20528a; border: 1px solid #163d66; }
.combo { display: flex; }
.combo button:first-child { flex: 1; }
.dd { width: 20px; display: flex; align-items: center; justify-content: center; border-left: 1px solid #163d66; }
.dd .caret { border-width: 5px; border-top-color: #fff; border-bottom: 0; }
.side { position: absolute; right: 0; top: 0; width: 41px; height: 308px; display: flex; flex-direction: column; align-items: center; padding-top: 18px; border-radius: 4px; background: #fff; }
.side button { height: 24px; margin-bottom: 12px; }
.side .ico { width: 25px; height: 24px; stroke-width: 1; }
.side .caret { margin: -3px 0 10px; }
.side hr { width: 29px; border: 0; border-top: 1px solid #444; margin: -1px 0 8px; }
.dialog { position: absolute; left: 96px; top: 202px; width: 449px; height: 181px; border-radius: 9px; background: #d9d9d9; font-size: 18px; line-height: 24px; color: #404040; }
.dhead { display: flex; justify-content: space-between; align-items: center; padding: 12px 16px 0 22px; }
.dhead .ico { width: 16px; height: 16px; color: #888; }
.dmsg { display: flex; align-items: center; gap: 13px; padding: 28px 0 0 31px; }
.ok { width: 36px; height: 36px; }
.dmsg p { margin: 0; padding-bottom: 3px; }
.dfoot { display: flex; justify-content: flex-end; padding: 37px 14px 0 0; }
.dfoot button { width: 98px; height: 33px; border-radius: 4px; background: #2b7fe3; color: #fff; font-size: 15px; }

/* status bar */
.status { display: flex; align-items: center; height: 39px; background: #fcfcfc; border-bottom: 1px solid #bdbdbd; white-space: nowrap; }
.status b { font-size: 16px; font-weight: 400; margin-left: 12px; }
.s-pos { width: 331px; padding-left: 2px; font-size: 16px; }
.s-h { width: 104px; }
.s-e { width: 166px; }
.s-n { width: 129px; }
.sbtns { display: flex; gap: 4px; margin-right: 6px; margin-left: -2px; }
.sbtns button { min-width: 31px; height: 31px; display: flex; align-items: center; justify-content: center; gap: 6px; padding: 0 5px; border: 1px solid #999; border-radius: 4px; }
.sbtns .on { background: #d3e5fb; border-color: #3d8bea; }
.sbtns .off { border-color: #bbb; }
.sbtns .off svg { color: #999; }
.sbtns .sep { margin-left: 4px; }
.edge { height: 10px; background: #eee; display: flex; align-items: flex-end; padding-left: 1325px; }
.edge i { width: 48px; height: 5px; border-radius: 4px 4px 0 0; background: #fafafa; }
</style>
